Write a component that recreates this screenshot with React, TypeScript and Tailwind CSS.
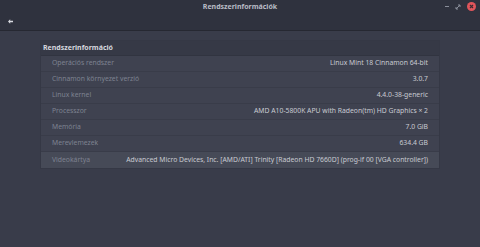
import React from 'react';

const rows: [string, string][] = [
  ['Operációs rendszer', 'Linux Mint 18 Cinnamon 64-bit'],
  ['Cinnamon környezet verzió', '3.0.7'],
  ['Linux kernel', '4.4.0-38-generic'],
  ['Processzor', 'AMD A10-5800K APU with Radeon(tm) HD Graphics × 2'],
  ['Memória', '7.0 GiB'],
  ['Merevlemezek', '634.4 GB'],
  ['Videokártya', 'Advanced Micro Devices, Inc. [AMD/ATI] Trinity [Radeon HD 7660D] (prog-if 00 [VGA controller])'],
];

export default function App() {
  return (
    <div className="w-[480px] h-[247px] flex flex-col bg-[#393c4a] overflow-hidden" style={{ fontFamily: '"Noto Sans", sans-serif' }}>
      {/* Header bar */}
      <div className="h-[31px] bg-[#2f323e] border-b border-[#262832] flex flex-col">
        <div className="relative h-[13px] flex items-center justify-center">
          <span className="text-[7px] font-bold text-[#b9bcc6] leading-none">Rendszerinformációk</span>
          <div className="absolute right-[4px] top-[2px] flex items-center gap-[6px]">
            <div className="w-[4px] h-[1px] bg-[#8a8e9a]" />
            <svg width="6" height="6" viewBox="0 0 6 6">
              <path d="M1 5 L5 1 M3 1 H5 V3 M1 3 V5 H3" stroke="#8a8e9a" strokeWidth="1" fill="none" />
            </svg>
            <div className="w-[9px] h-[9px] rounded-full bg-[#e0555b] flex items-center justify-center">
              <svg width="5" height="5" viewBox="0 0 5 5">
                <path d="M1 1 L4 4 M4 1 L1 4" stroke="#3a2a30" strokeWidth="1.2" />
              </svg>
            </div>
          </div>
        </div>
        <div className="flex-1 flex items-center pl-[8px]">
          <svg width="5" height="5" viewBox="0 0 5 5">
            <path d="M0 2.5 L2.2 0.3 V1.7 H5 V3.3 H2.2 V4.7 Z" fill="#d8dae0" />
          </svg>
        </div>
      </div>

      {/* Content */}
      <div className="pt-[9px] px-[40px]">
        <div className="bg-[#3f4250] border border-[#353845]">
          <div className="h-[15px] bg-[#363946] flex items-center pl-[2px] border-b border-[#313440]">
            <span className="text-[7px] font-bold text-[#d5d7de]">Rendszerinformáció</span>
          </div>
          {rows.map(([label, value], i) => (
            <div
              key={label}
              className={`h-[16px] flex items-center justify-between pl-[11px] pr-[11px] gap-[10px] ${i < rows.length - 1 ? 'border-b border-[#393c49]' : 'bg-[#464a57]'}`}
            >
              <span className="text-[6.8px] text-[#7e8291] whitespace-nowrap">{label}</span>
              <span className="text-[6.8px] text-[#c9cbd2] whitespace-nowrap">{value}</span>
            </div>
          ))}
        </div>
      </div>
    </div>
  );
}
